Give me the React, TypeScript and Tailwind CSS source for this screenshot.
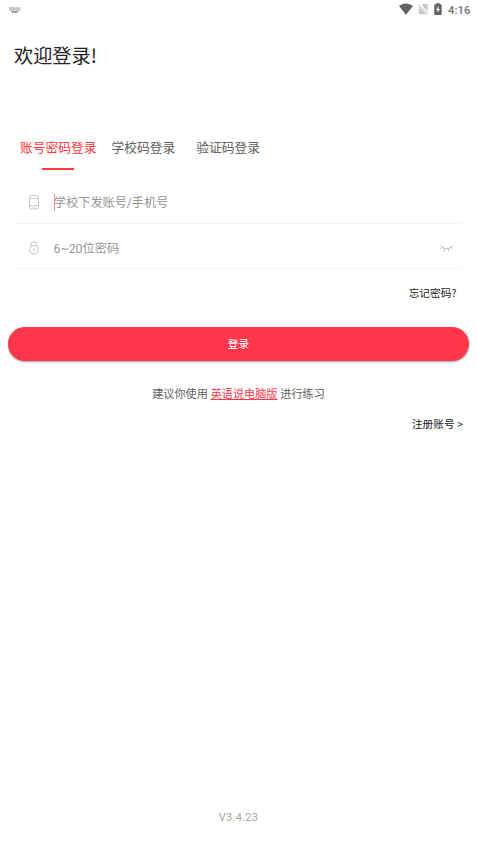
import React from 'react';

function KeyboardIcon() {
  return (
    <svg className="block" width="12" height="7" viewBox="0 0 12 7" fill="none" stroke="#8c8c8c">
      <path d="M0 1h11.500M0 3h11.500" strokeWidth="1.100" strokeDasharray="1.4 .4" />
      <path d="M0 2h11.500" strokeWidth=".6" strokeOpacity=".6" />
      <path d="M2 4.500h7.500M3 5.500h5.500" strokeWidth=".8" />
    </svg>
  );
}

function StatusBar() {
  return (
    <header className="flex h-5 items-center justify-between pl-[9px] pr-[6px]">
      <KeyboardIcon />
      <div className="flex h-full items-center">
        <svg className="mb-[2px] block" width="14" height="12" viewBox="0 0 14 12">
          <path d="M0 3.1C4 -.3 10 -.3 14 3.1L7 11.7Z" fill="#636363" />
        </svg>
        <svg className="mb-[2px] ml-[5px] block" width="11" height="12" viewBox="0 0 11 12">
          <path d="M3.200 1H8.700q.9 0 .9.900V9Z" fill="#c8c8c8" />
          <path d="M.8 3.600v6.700q0 .9.900.9h6.700Z" fill="#c8c8c8" />
          <path d="M.3 1.500l9.500 10" stroke="#bdbdbd" strokeWidth="1" />
        </svg>
        <svg className="mb-[2px] ml-[5px] block" width="8" height="12" viewBox="0 0 8 12">
          <path d="M2.500 0h3v1.200H7q.7 0 .7.700v9.400q0 .7-.7.700H1q-.7 0-.7-.7V1.900q0-.7.7-.7h1.500Z" fill="#636363" />
          <path d="M4.500 3L2 7h1.600v3L6 6H4.500Z" fill="#fff" />
        </svg>
        <span className="ml-[6px] w-[23px] whitespace-nowrap pt-px text-[11.200px] font-medium leading-5 tracking-[0.1px] text-[#707070]">4:16</span>
      </div>
    </header>
  );
}

function PhoneIcon() {
  return (
    <svg className="block" width="10" height="15" viewBox="0 0 10 15" fill="none" stroke="#c2c2c2" strokeWidth=".9">
      <rect x=".5" y=".6" width="9" height="13.300" rx="1.400" />
      <path d="M.5 3.500h9M.5 10.700h9M4.200 12.300h1.600" />
    </svg>
  );
}

function LockIcon() {
  return (
    <svg className="mt-[3px] block" width="10" height="14" viewBox="0 0 10 14" fill="none" stroke="#bdbdbd" strokeWidth=".9">
      <circle cx="5" cy="8.700" r="4.300" />
      <path d="M2.200 5.200V3.500a2.800 2.800 0 0 1 5.600 0v1.700" />
      <path d="M5.200 7.700v2M4.500 8.600h1.500" />
    </svg>
  );
}

function ClosedEyeIcon() {
  return (
    <svg className="mt-[4px] block" width="13" height="7" viewBox="0 0 13 7" fill="none" stroke="#b9b9b9" strokeWidth=".9">
      <path d="M.3.300C3.500 4.700 9.500 4.700 12.700.300M1.900 2L.6 4M4.700 3.500L4.300 6.300M8.300 3.500l.4 2.800M11.100 2l1.300 2" />
    </svg>
  );
}

function Tab({ label, active = false }: { label: string; active?: boolean }) {
  return (
    <button className={`flex h-8 flex-col items-center justify-between whitespace-nowrap text-[12.750px] leading-[18px] ${active ? 'text-[#ff363b]' : 'text-[#606060]'}`}>
      <span className="pt-px">{label}</span>
      {active && <span className="h-[2px] w-8 bg-[#ff3b3f]" />}
    </button>
  );
}

export default function App() {
  return (
    <main className="flex h-[848px] w-full flex-col overflow-hidden bg-white font-[Roboto,'Noto_Sans_CJK_SC',sans-serif]">
      <StatusBar />
      <h1 className="ml-[14px] mt-[21px] h-7 whitespace-nowrap font-['Noto_Sans_CJK_SC',sans-serif] text-[19.200px] leading-7 text-[#222]">欢迎登录!</h1>
      <nav className="ml-5 mt-[69px] flex h-8">
        <Tab label="账号密码登录" active />
        <div className="ml-[15px]"><Tab label="学校码登录" /></div>
        <div className="ml-[21px]"><Tab label="验证码登录" /></div>
      </nav>
      <section className="mx-4 mt-[11px] text-[12.150px] text-[#949494]">
        <div className="flex h-[43px] items-center border-b border-[#f4f4f4] pl-[13px]">
          <PhoneIcon />
          <span className="ml-[14.500px] h-[17px] w-px shrink-0 bg-[#ff8a98]" />
          <span className="-ml-[0.500px] pt-[2px]">学校下发账号/手机号</span>
        </div>
        <div className="flex h-[45px] items-center border-b border-[#f4f4f4] pl-[13px] pr-2">
          <LockIcon />
          <span className="ml-[14.500px] flex-1 pt-[6px] text-[12.250px]">6~20位密码</span>
          <ClosedEyeIcon />
        </div>
      </section>
      <a className="mr-[20.500px] mt-[15px] h-[18px] self-end font-['Noto_Sans_CJK_SC',sans-serif] text-[10.700px] leading-[18px] text-[#222]">忘记密码?</a>
      <button className="mx-2 mt-[25px] h-[34px] shrink-0 rounded-full bg-[#ff364c] pt-[2px] text-[10.700px] text-white shadow-[0_1px_2px_rgba(0,0,0,0.4)]">登录</button>
      <p className="mt-[25px] h-[18px] whitespace-nowrap text-center text-[11.150px] leading-[18px] text-[#606060]">
        建议你使用 <a className="text-[#ff364c] underline">英语说电脑版</a> 进行练习
      </p>
      <a className="mr-[14px] mt-[11px] h-[18px] self-end font-['Noto_Sans_CJK_SC',sans-serif] text-[10.700px] leading-[18px] text-[#222]">注册账号 &gt;</a>
      <footer className="mb-[21px] mt-auto text-center text-[11px] leading-[18px] tracking-[0.300px] text-[#a3a3a3]">V3.4.23</footer>
    </main>
  );
}
